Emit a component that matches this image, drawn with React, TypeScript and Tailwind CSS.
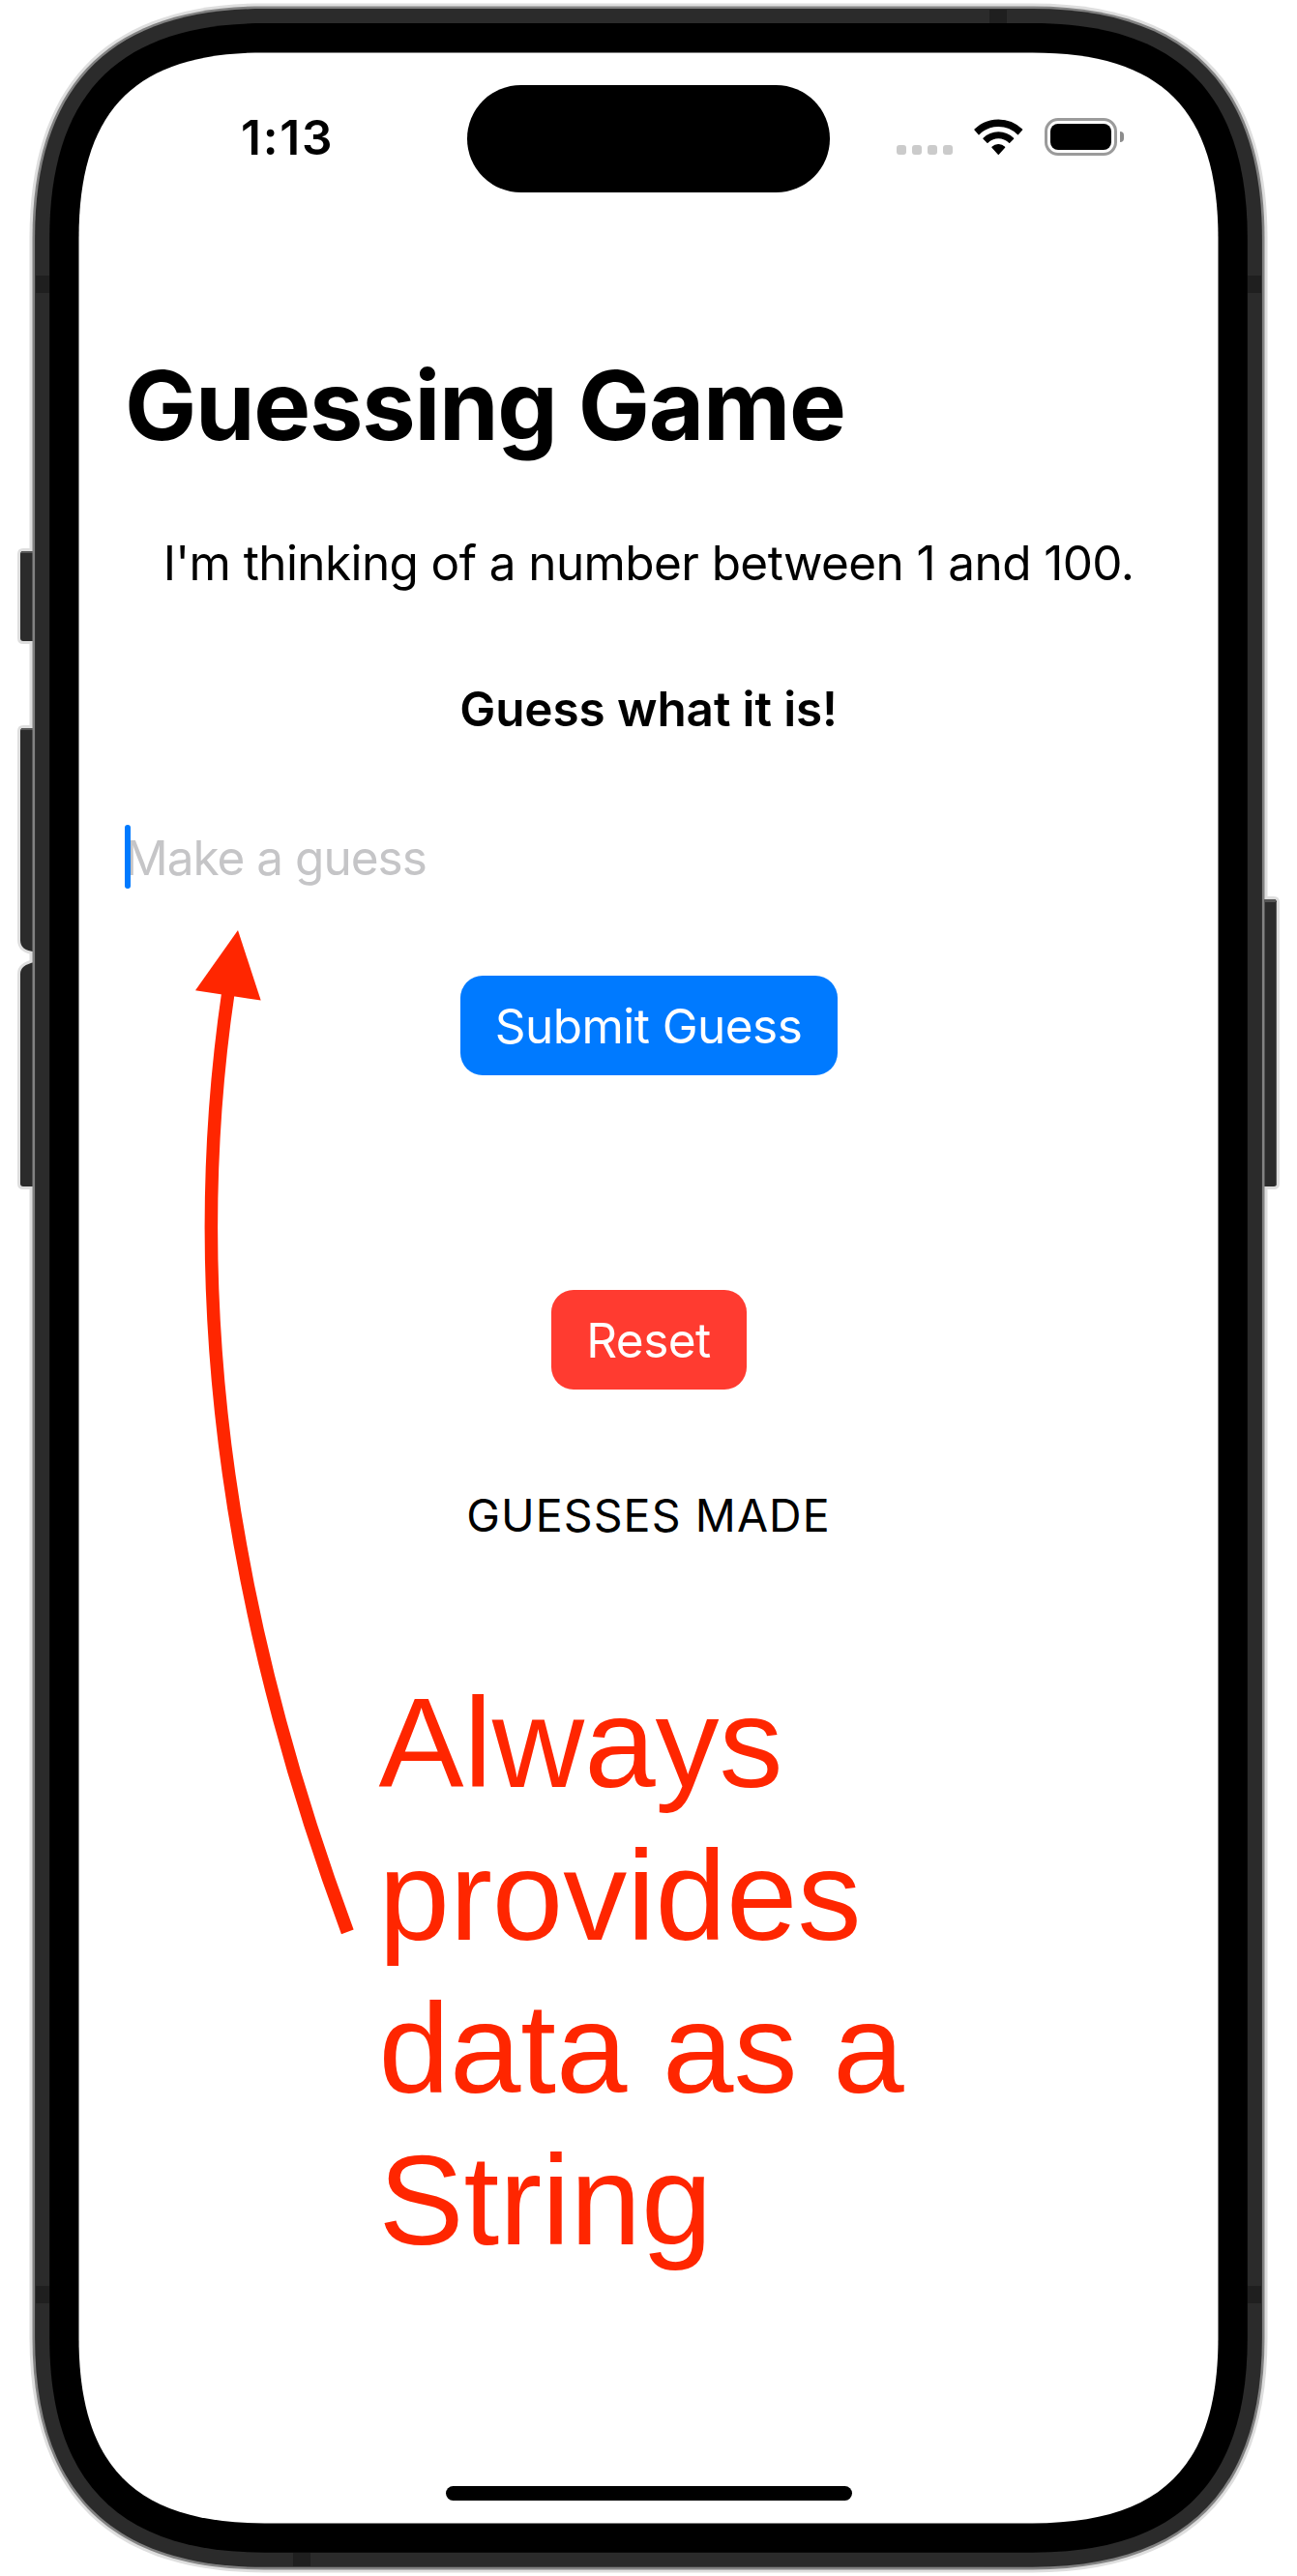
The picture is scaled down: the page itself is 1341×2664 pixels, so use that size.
import type { ReactNode } from "react";

// Outline of the phone at `o` pixels outside the screen edge, with smooth corners.
function outline(o: number) {
  const x = 81.5 - o;
  const y = 54.4 - o;
  const R = 1259.5 + o;
  const B = 2609.4 + o;
  const l = 192 + o;
  const m = 58.7 + 0.448 * o;
  return [
    `M${x + l} ${y}H${R - l}`,
    `C${R - m} ${y} ${R} ${y + m} ${R} ${y + l}`,
    `V${B - l}`,
    `C${R} ${B - m} ${R - m} ${B} ${R - l} ${B}`,
    `H${x + l}`,
    `C${x + m} ${B} ${x} ${B - m} ${x} ${B - l}`,
    `V${y + l}`,
    `C${x} ${y + m} ${x + m} ${y} ${x + l} ${y}Z`,
  ].join("");
}

const SIDE_BUTTONS = [
  "M36 570H24Q21 570 21 573V660Q21 663 24 663H36Z",
  "M36 753H24Q21 753 21 756V972C21 980 26 983 36 984.5Z",
  "M36 995C26 997 21 1001 21 1007V1224Q21 1227 24 1227H36Z",
  "M1305 930H1317Q1320 930 1320 933V1224Q1320 1227 1317 1227H1305Z",
];

function PhoneFrame() {
  return (
    <svg className="absolute inset-0" width="1341" height="2664" viewBox="0 0 1341 2664" aria-hidden="true">
      {SIDE_BUTTONS.map((d) => (
        <path key={d} d={d} fill="#dedede" stroke="#dedede" strokeWidth="6" />
      ))}
      <path d={outline(51)} fill="#dedede" />
      {SIDE_BUTTONS.map((d) => (
        <path key={d} d={d} fill="#2b2b2b" />
      ))}
      <g fill="#555555">
        <rect x="22" y="570" width="12" height="2" />
        <rect x="22" y="753" width="12" height="2" />
        <rect x="1308" y="930" width="11" height="3" />
        <rect x="1319" y="933" width="1" height="292" />
      </g>
      <path d={outline(48)} fill="#828282" />
      <path d={outline(45.4)} fill="#2b2b2b" />
      <g fill="#1f1f1f">
        <rect x="37" y="285" width="14" height="18" />
        <rect x="1290" y="285" width="14" height="18" />
        <rect x="37" y="2364" width="14" height="18" />
        <rect x="1290" y="2364" width="14" height="18" />
        <rect x="1023" y="10" width="18" height="14" />
        <rect x="303" y="2640" width="18" height="14" />
      </g>
      <path d={outline(30.3)} fill="#000" />
      <path d={outline(0)} fill="#fff" />
    </svg>
  );
}

function WifiIcon() {
  return (
    <svg className="ml-[22px] mt-[35px] shrink-0" width="50.6" height="38" viewBox="0 0 152 114" aria-hidden="true">
      <g strokeWidth="4" stroke="#000" strokeLinejoin="round">
        <path d="M3 33A104 104 0 0 1 149 33L137 47A86 86 0 0 0 15 47Z" />
        <path d="M30 61A65 65 0 0 1 122 61L110 73A48 48 0 0 0 42 73Z" />
        <path d="M57 88A26 26 0 0 1 95 88L76 109Z" />
      </g>
    </svg>
  );
}

function BatteryIcon() {
  return (
    <div className="ml-[22px] mt-[34px] flex h-[39px] shrink-0 items-center">
      <div className="h-[39px] w-[75px] rounded-[14px] border-[3px] border-[#9b9b9b] p-[3px]">
        <div className="h-full w-full rounded-[8px] bg-black" />
      </div>
      <div className="ml-[3px] h-[11px] w-[4px] rounded-r-full bg-[#8c8c8c]" />
    </div>
  );
}

function StatusBar() {
  return (
    <header className="mt-[88px] flex h-[110px] items-start pl-[249px]">
      <span className="mt-6 h-[60px] w-[234px] text-[49.5px] leading-[60px] font-semibold tracking-[1.8px]">1:13</span>
      <div className="h-[111px] w-[375px] shrink-0 rounded-full bg-black" />
      <div className="mt-[62px] ml-[69px] flex shrink-0 gap-1.5">
        {[0, 1, 2, 3].map((i) => (
          <span key={i} className="size-[10px] rounded-[3px] bg-[#cbcbcb]" />
        ))}
      </div>
      <WifiIcon />
      <BatteryIcon />
    </header>
  );
}

function ActionButton({ className, children }: { className: string; children: ReactNode }) {
  return (
    <button type="button" className={`h-[103px] rounded-[23px] text-[49.5px] leading-[60px] tracking-[-0.55px] text-white ${className}`}>
      {children}
    </button>
  );
}

function Annotation() {
  return (
    <div className="absolute inset-0 text-[#ff2600]">
      <svg className="absolute inset-0" width="1341" height="2664" viewBox="0 0 1341 2664" aria-hidden="true">
        <path d="M236 1026Q168.5 1484 359.3 1997.8" fill="none" stroke="#ff2600" strokeWidth="13.5" />
        <path d="M246 962L269.7 1034.6L202 1024.2Z" fill="#ff2600" />
      </svg>
      <p className="absolute top-[1724px] left-[391.5px] w-[580px] font-['Liberation_Sans',sans-serif] text-[132px] leading-[157.8px]">
        Always
        <br />
        provides
        <br />
        data as a
        <br />
        String
      </p>
    </div>
  );
}

export default function App() {
  return (
    <div className="relative h-[2664px] w-[1341px] overflow-hidden bg-white font-[Inter,sans-serif] text-black">
      <PhoneFrame />
      <div className="relative flex h-full flex-col">
        <StatusBar />
        <main className="flex flex-col items-center px-[129px] text-[49.5px] leading-[60px]">
          <h1 className="mt-[161px] w-full text-[99px] leading-[120px] font-bold tracking-[-1.28px]">Guessing Game</h1>
          <p className="mt-[73px] tracking-[-0.6px] whitespace-nowrap">I'm thinking of a number between 1 and 100.</p>
          <p className="mt-[91px] font-semibold tracking-[-0.12px]">Guess what it is!</p>
          <div className="mt-[90px] flex h-[66px] w-full items-center">
            <span className="h-[66px] w-[6px] rounded-full bg-[#007aff]" />
            <span className="-ml-[6px] pt-[2px] tracking-[-1px] text-[#c5c5c7] [clip-path:inset(0_0_0_6px)]">Make a guess</span>
          </div>
          <ActionButton className="mt-[90px] w-[390px] bg-[#007aff]">Submit Guess</ActionButton>
          <ActionButton className="mt-[222px] w-[202px] bg-[#ff3b30]">Reset</ActionButton>
          <p className="mt-[102px] text-[46.5px] leading-[56px] tracking-[1.1px]">GUESSES MADE</p>
        </main>
        <div className="mt-auto mb-[78.5px] h-[14.5px] w-[420px] self-center rounded-full bg-black" />
      </div>
      <Annotation />
    </div>
  );
}
